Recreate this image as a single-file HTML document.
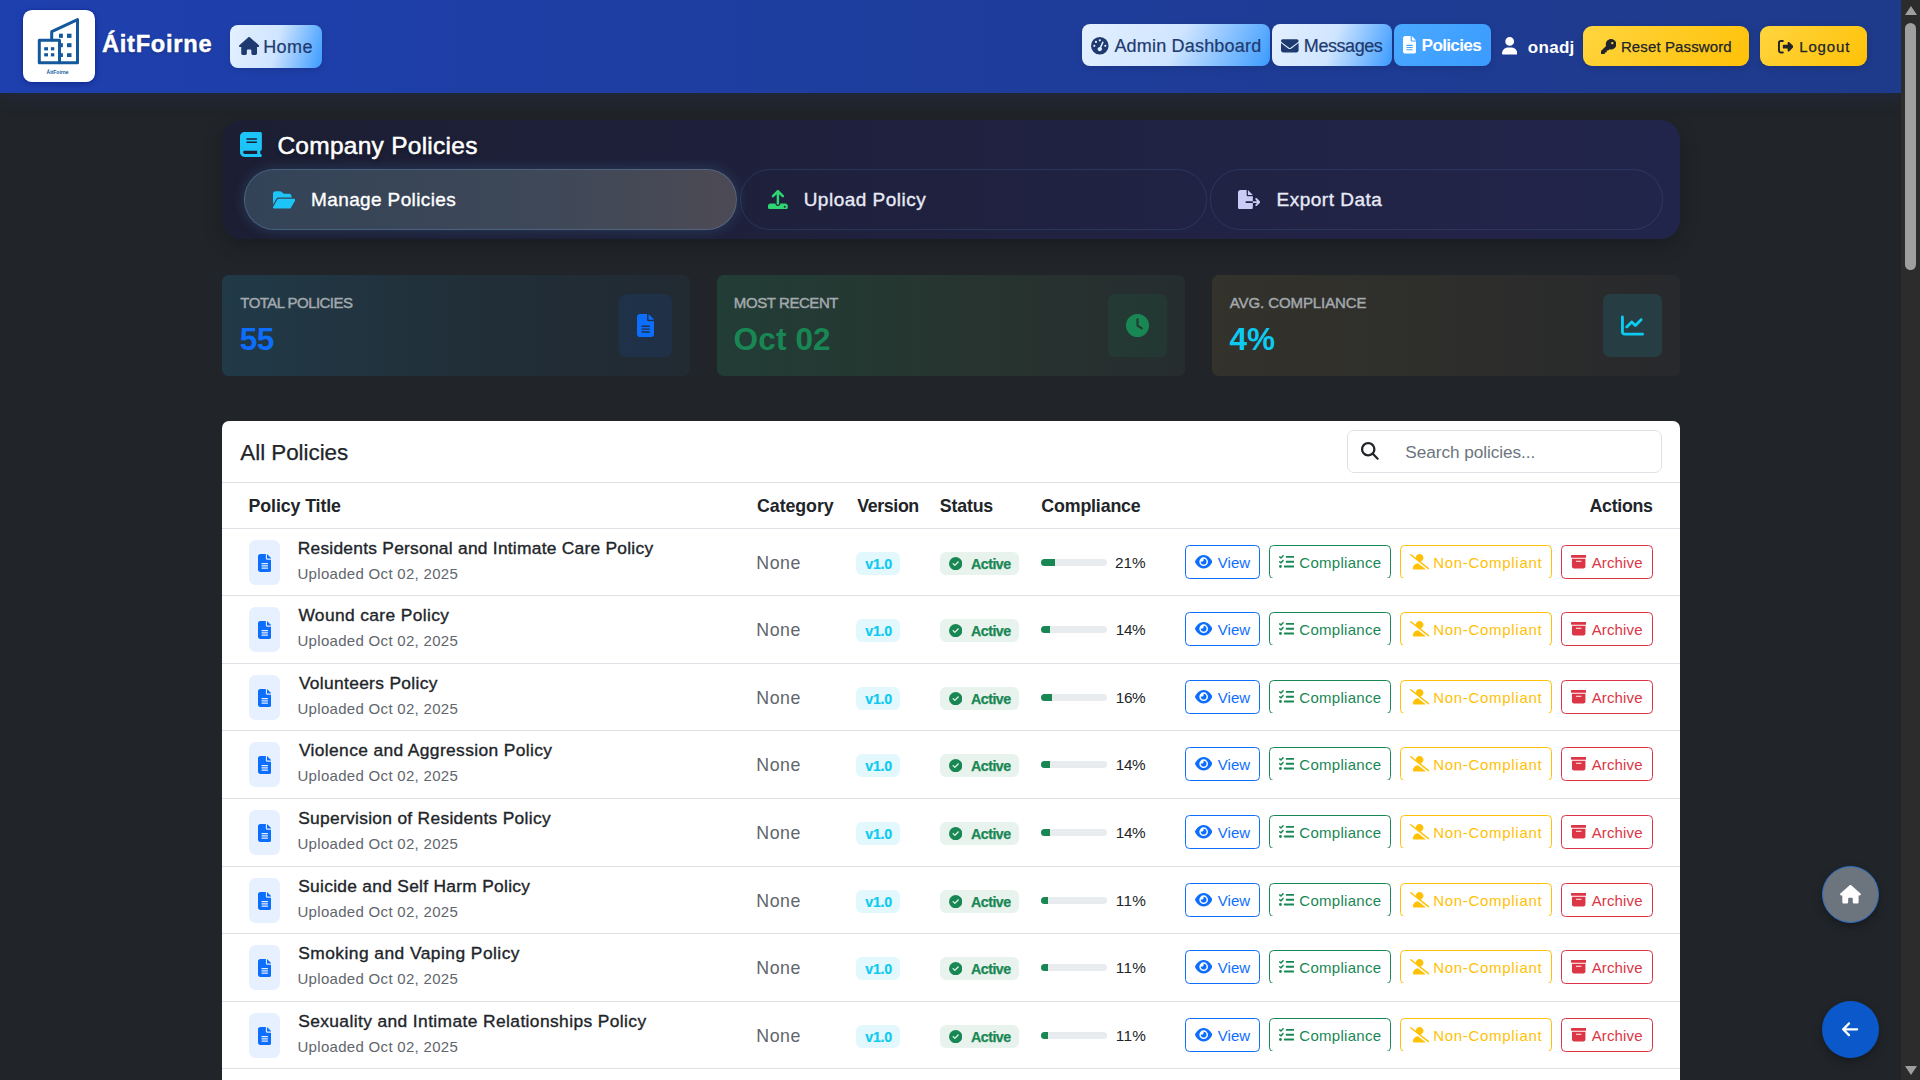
<!DOCTYPE html><html lang="en"><head><meta charset="utf-8"><title>Company Policies</title><style>
*{box-sizing:border-box;margin:0;padding:0}
html,body{width:1920px;height:1080px;overflow:hidden;background:#212529}
body{font-family:"Liberation Sans",sans-serif;font-size:17px;color:#212529;position:relative}
svg.ic{display:block}
.t{white-space:nowrap;display:inline-block}
.hdr{position:absolute;left:0;top:0;width:1901px;height:92.8px;background:linear-gradient(90deg,#1e40af 0%,#1e3a8a 100%);box-shadow:0 4px 18px rgba(30,64,175,.16)}
.logo{position:absolute;left:23px;top:10px;width:72px;height:72px;background:#fff;border-radius:8.8px;box-shadow:0 0 2px rgba(0,25,140,.8),0 2px 6px rgba(0,10,90,.3)}
.brand{position:absolute;left:102px;top:23.7px;line-height:40px;color:#fff;font-weight:700;font-size:23.6px;-webkit-text-stroke:.45px #fff;text-shadow:0 1px 3px rgba(0,0,0,.3)}
.nb{position:absolute;border-radius:8px;background:linear-gradient(117deg,#e4f0ff 0%,#cfe5ff 50%,#3b9bff 100%);color:#1e3a6e;font-size:18px;box-shadow:0 2px 6px rgba(0,0,0,.12);-webkit-text-stroke:.2px currentColor}
.nb.act{background:linear-gradient(135deg,#4aa9ff,#3a9bff);color:#fff;font-weight:700;font-size:17.2px;-webkit-text-stroke:0}
.usr{color:#fff;font-weight:700;font-size:17px}
.yb{position:absolute;border-radius:9px;background:linear-gradient(135deg,#ffd53f 0%,#ffc107 100%);color:#212529;font-size:15px;box-shadow:0 2px 6px rgba(0,0,0,.15)}
.yb .t{-webkit-text-stroke:.25px #212529}
.panel{position:absolute;left:222px;top:120px;width:1458px;height:119px;border-radius:20px;background:linear-gradient(90deg,#1c1e33 0%,#22254b 100%);box-shadow:0 6px 18px rgba(0,0,0,.25)}
.ptitle{position:absolute;left:56px;top:5.8px;line-height:40px;color:#fff;font-size:24.5px;-webkit-text-stroke:.5px #fff;text-shadow:0 2px 4px rgba(0,0,0,.3)}
.pill{position:absolute;top:49px;height:60.5px;border-radius:30px;border:1px solid rgba(80,130,190,.2);color:#e8eaf6;font-size:19px;-webkit-text-stroke:.35px currentColor}
.pill.on{background:linear-gradient(90deg,#334357 0%,#3e4858 60%,#4c4a54 100%);border-color:rgba(110,160,210,.32);box-shadow:0 0 14px rgba(90,170,220,.2);color:#fff}
.stat{position:absolute;top:275px;width:468px;height:101px;border-radius:7px}
.s1{background:linear-gradient(90deg,#213a48 0%,#212f39 50%,#222a32 100%)}
.s2{background:linear-gradient(90deg,#223d36 0%,#27342f 55%,#262d2f 100%)}
.s3{background:linear-gradient(90deg,#33322b 0%,#28292c 100%)}
.slabel{position:absolute;left:17.6px;top:18px;line-height:20px;font-size:15px;color:#a3a9ae;-webkit-text-stroke:.45px #a3a9ae}
.sval{position:absolute;left:17.6px;top:44px;line-height:40px;font-size:31.5px;font-weight:700}
.sic{position:absolute;right:18.2px;top:19px;height:63px;border-radius:7px;display:flex;align-items:center;justify-content:center}
.card{position:absolute;left:222px;top:421px;width:1458px;height:700px;background:#fff;border-radius:7px 7px 0 0;overflow:hidden}
.ctitle{position:absolute;left:18px;top:12px;line-height:40px;font-size:22.4px;color:#212529;-webkit-text-stroke:.25px #212529}
.search{position:absolute;left:1125px;top:9px;width:315px;height:43px;border:1px solid #dee2e6;border-radius:7px;font-size:17.2px}
.hline{position:absolute;left:0;width:100%;height:1px;background:#dee2e6}
.th{position:absolute;top:65px;line-height:40px;font-weight:700;font-size:17.8px;color:#212529}
.row{position:absolute;left:0;width:100%;border-bottom:1px solid #dee2e6}
.fbox{position:absolute;left:27.3px;top:11px;width:30.8px;height:45px;border-radius:6.5px;background:#e7f0ff;display:flex;align-items:center;justify-content:center}
.rt{position:absolute;left:76.5px;top:7.1px;line-height:24px;font-size:17.4px;color:#212529;-webkit-text-stroke:.35px #212529}
.ru{position:absolute;left:76.5px;top:34.1px;line-height:22px;font-size:15px;color:#5f666d}
.rn{position:absolute;left:535.4px;top:22px;line-height:24px;font-size:17.8px;color:#5f666d}
.bv{position:absolute;left:634px;top:22.5px;width:43.5px;height:23px;border-radius:6px;background:#e2f8fd;color:#0dcaf0;font-weight:700;font-size:14.2px;line-height:24px;text-align:center;-webkit-text-stroke:.2px #0dcaf0}
.ba{position:absolute;left:718px;top:22.5px;width:79px;height:23px;border-radius:6px;background:#e8f3ee;color:#198754;font-weight:700;font-size:14.2px;-webkit-text-stroke:.25px #198754}
.pb{position:absolute;left:819px;top:29.7px;width:66px;height:7px;border-radius:3.5px;background:#e9ecef;overflow:hidden}
.pb div{height:100%;background:#198754}
.pp{position:absolute;left:893.6px;top:21.5px;line-height:24px;font-size:15.3px;color:#212529}
.ab{position:absolute;top:16px;height:34px;border:1px solid;border-radius:4.5px;font-size:15px;line-height:33px}
.ab.nb0{clip-path:inset(-1px -1px 1px -1px)}
.ab.v{border-color:#0d6efd;color:#0d6efd}
.ab.c{border-color:#198754;color:#198754}
.ab.n{border-color:#ffc107;color:#ffc107}
.ab.a{border-color:#dc3545;color:#dc3545}
.fab{position:absolute;width:57px;height:57px;border-radius:50%;left:1822px;display:flex;align-items:center;justify-content:center;box-shadow:0 4px 10px rgba(0,0,0,.3)}
.fab.g{top:866px;background:#6c757d;border:1px solid #2a6fc9}
.fab.b{top:1001px;background:#0b58ca}
.sb{position:absolute;left:1901px;top:0;width:19px;height:1080px;background:#2c2c2c}
.sbt{position:absolute;left:4px;top:22.5px;width:11px;height:247px;border-radius:5.5px;background:#9f9f9f}
.sbu{position:absolute;left:3.5px;top:6px;width:0;height:0;border-left:6px solid transparent;border-right:6px solid transparent;border-bottom:9.5px solid #9f9f9f}
.sbd{position:absolute;left:3.5px;top:1065.5px;width:0;height:0;border-left:6px solid transparent;border-right:6px solid transparent;border-top:9.5px solid #9f9f9f}

</style></head><body>
<div class="hdr">
<div class="logo"><svg viewBox="0 0 72 72" width="72" height="72"><g fill="#14599e"><rect x="21.2" y="37.2" width="3.8" height="3.2"/><rect x="27.9" y="37.2" width="3.4" height="3.2"/><rect x="21.2" y="43.2" width="3.8" height="3.2"/><rect x="27.9" y="43.2" width="3.4" height="3.2"/><rect x="36" y="23.7" width="3.9" height="4.2"/><rect x="44" y="23.7" width="4.5" height="4.2"/><rect x="36" y="33.2" width="3.9" height="4"/><rect x="44" y="33.2" width="4.5" height="4"/><rect x="36" y="43.2" width="3.9" height="3.8"/><rect x="44" y="43.2" width="4.5" height="3.8"/></g><g fill="none" stroke="#14599e" stroke-width="3" stroke-linejoin="round" stroke-linecap="round"><path d="M28.7 30V21.7L54.5 9.6V52.8H37"/><rect x="16.3" y="30.2" width="20.2" height="22.6"/></g><text x="34.6" y="63.6" text-anchor="middle" font-family="Liberation Sans, sans-serif" font-weight="700" font-size="5" fill="#14599e">ÁitFoirne</text></svg></div>
<div class="brand"><span class="t " id="brand" style="letter-spacing:0.766px;transform:translateX(-0.12px);">ÁitFoirne</span></div>
<div class="nb home" style="left:230px;top:25px;width:92px;height:42.5px;background:linear-gradient(106deg,#e4f0ff 0%,#cfe5ff 50%,#3b9bff 100%)"><svg class="ic" viewBox="0 0 576 512" width="20.25" height="18" style="position:absolute;left:8.5px;top:11.6px"><path fill="#1e3a6e" d="M575.8 255.5c0 18-15 32.1-32 32.1h-32l.7 160.2c0 2.7-.2 5.4-.5 8.1V472c0 22.1-17.9 40-40 40H456c-1.1 0-2.2 0-3.3-.1c-1.4 .1-2.8 .1-4.2 .1H416 392c-22.1 0-40-17.9-40-40V448 384c0-17.7-14.3-32-32-32H256c-17.7 0-32 14.3-32 32v64 24c0 22.1-17.9 40-40 40H160 128.1c-1.5 0-3-.1-4.5-.2c-1.2 .1-2.4 .2-3.6 .2H104c-22.1 0-40-17.9-40-40V360c0-.9 0-1.9 .1-2.8V287.6H32c-18 0-32-14-32-32.1c0-9 3-17 10-24L266.400 8c7-7 15-8 22-8s15 2 21 7L564.8 231.5c8 7 12 15 11 24z"/></svg><span class="t " id="home" style="position:absolute;left:34.5px;top:1px;line-height:42px;letter-spacing:0.407px;transform:translateX(-1.31px);">Home</span></div>
<div class="nb" style="left:1082px;top:24px;width:188px;height:42px"><svg class="ic" viewBox="0 0 512 512" width="17.6" height="17.6" style="position:absolute;left:9px;top:13.2px"><path fill="#1e3a6e" d="M0 256a256 256 0 1 1 512 0A256 256 0 1 1 0 256zM288 96a32 32 0 1 0 -64 0 32 32 0 1 0 64 0zM256 416c35.3 0 64-28.7 64-64c0-17.4-6.9-33.1-18.1-44.6L366 161.700c5.3-12.1-.2-26.3-12.3-31.6s-26.3 .2-31.6 12.3L257.9 288c-.6 0-1.3 0-1.9 0c-35.3 0-64 28.7-64 64s28.700 64 64 64zM176 144a32 32 0 1 0 -64 0 32 32 0 1 0 64 0zM96 288a32 32 0 1 0 0-64 32 32 0 1 0 0 64zm352-32a32 32 0 1 0 -64 0 32 32 0 1 0 64 0z"/></svg><span class="t " id="admin" style="position:absolute;left:32px;top:1px;line-height:42px;letter-spacing:0.191px;transform:translateX(0.42px);">Admin Dashboard</span></div>
<div class="nb" style="left:1272px;top:24px;width:120px;height:42px;background:linear-gradient(110deg,#e4f0ff 0%,#cfe5ff 50%,#3b9bff 100%)"><svg class="ic" viewBox="0 0 512 512" width="17.6" height="17.6" style="position:absolute;left:9px;top:13.2px"><path fill="#1e3a6e" d="M48 64C21.5 64 0 85.5 0 112c0 15.1 7.1 29.3 19.2 38.4L236.8 313.6c11.4 8.5 27 8.5 38.4 0L492.8 150.4c12.1-9.1 19.2-23.3 19.2-38.4c0-26.5-21.5-48-48-48H48zM0 176V384c0 35.3 28.7 64 64 64H448c35.3 0 64-28.7 64-64V176L294.4 339.2c-22.8 17.1-54 17.1-76.8 0L0 176z"/></svg><span class="t " id="msgs" style="position:absolute;left:33px;top:1px;line-height:42px;letter-spacing:-0.439px;transform:translateX(-1.18px);">Messages</span></div>
<div class="nb act" style="left:1394px;top:24px;width:97px;height:42px"><svg class="ic" viewBox="0 0 384 512" width="13.2" height="17.6" style="position:absolute;left:9px;top:12.2px"><path fill="#fff" d="M64 0C28.7 0 0 28.7 0 64V448c0 35.3 28.7 64 64 64H320c35.3 0 64-28.7 64-64V160H256c-17.7 0-32-14.3-32-32V0H64zM256 0V128H384L256 0zM112 256H272c8.8 0 16 7.2 16 16s-7.2 16-16 16H112c-8.8 0-16-7.2-16-16s7.2-16 16-16zm0 64H272c8.8 0 16 7.2 16 16s-7.2 16-16 16H112c-8.8 0-16-7.2-16-16s7.2-16 16-16zm0 64H272c8.8 0 16 7.2 16 16s-7.2 16-16 16H112c-8.8 0-16-7.2-16-16s7.2-16 16-16z"/></svg><span class="t " id="pol" style="position:absolute;left:28px;top:0;line-height:42px;letter-spacing:-0.689px;transform:translateX(-0.39px);">Policies</span></div>
<div class="usr"><svg class="ic" viewBox="0 0 448 512" width="15.4" height="17.6" style="position:absolute;left:1502px;top:37.3px"><path fill="#fff" d="M224 256A128 128 0 1 0 224 0a128 128 0 1 0 0 256zm-45.7 48C79.8 304 0 383.8 0 482.3C0 498.7 13.3 512 29.7 512H418.3c16.4 0 29.7-13.3 29.7-29.7C448 383.8 368.2 304 269.7 304H178.3z"/></svg><span class="t " id="onadj" style="position:absolute;left:1528px;top:26.5px;line-height:42px;letter-spacing:0.29px;transform:translateX(-0.21px);">onadj</span></div>
<div class="yb" style="left:1583px;top:26px;width:166px;height:40px"><svg class="ic" viewBox="0 0 512 512" width="15.4" height="15.4" style="position:absolute;left:18px;top:12.6px"><path fill="#212529" d="M336 352c97.2 0 176-78.8 176-176S433.2 0 336 0S160 78.8 160 176c0 18.7 2.9 36.8 8.3 53.7L7 391c-4.5 4.5-7 10.6-7 17v80c0 13.3 10.7 24 24 24h80c13.3 0 24-10.7 24-24V448h40c13.3 0 24-10.7 24-24V384h40c6.4 0 12.5-2.5 17-7l33.3-33.3c16.9 5.4 35 8.3 53.7 8.3zM376 96a40 40 0 1 1 0 80 40 40 0 1 1 0-80z"/></svg><span class="t " id="reset" style="position:absolute;left:38.8px;top:1px;line-height:40px;letter-spacing:0.123px;transform:translateX(-0.92px);">Reset Password</span></div>
<div class="yb" style="left:1760px;top:26px;width:107px;height:40px"><svg class="ic" viewBox="0 0 512 512" width="15.4" height="15.4" style="position:absolute;left:18px;top:12.6px"><path fill="#212529" d="M377.9 105.9L500.7 228.7c7.2 7.2 11.3 17.1 11.3 27.3s-4.1 20.1-11.3 27.3L377.9 406.1c-6.4 6.4-15 9.9-24 9.9c-18.7 0-33.9-15.2-33.9-33.9l0-62.1-128 0c-17.7 0-32-14.3-32-32l0-64c0-17.7 14.3-32 32-32l128 0 0-62.1c0-18.7 15.2-33.9 33.9-33.9c9 0 17.6 3.6 24 9.9zM160 96L96 96c-17.7 0-32 14.3-32 32l0 256c0 17.7 14.3 32 32 32l64 0c17.7 0 32 14.3 32 32s-14.3 32-32 32l-64 0c-53 0-96-43-96-96L0 128C0 75 43 32 96 32l64 0c17.7 0 32 14.3 32 32s-14.3 32-32 32z"/></svg><span class="t " id="logout" style="position:absolute;left:39.6px;top:1px;line-height:40px;letter-spacing:0.866px;transform:translateX(-0.39px);">Logout</span></div>
</div>
<div class="panel">
<svg class="ic" viewBox="0 0 448 512" width="21.88" height="25" style="position:absolute;left:18px;top:12px"><path fill="#1cc4f8" d="M96 0C43 0 0 43 0 96V416c0 53 43 96 96 96H384h32c17.7 0 32-14.3 32-32s-14.3-32-32-32V384c17.7 0 32-14.3 32-32V32c0-17.7-14.3-32-32-32H384 96zm0 384H352v64H96c-17.7 0-32-14.3-32-32s14.3-32 32-32zm32-240c0-8.800 7.2-16 16-16H336c8.800 0 16 7.2 16 16s-7.2 16-16 16H144c-8.800 0-16-7.2-16-16zm16 48H336c8.800 0 16 7.2 16 16s-7.2 16-16 16H144c-8.800 0-16-7.2-16-16s7.2-16 16-16z"/></svg>
<span class="t ptitle" id="title" style="letter-spacing:0.261px;transform:translateX(-0.6px);">Company Policies</span>
<div class="pill on" style="left:21.5px;width:493.5px"><svg class="ic" viewBox="0 0 576 512" width="22.28" height="19.8" style="position:absolute;left:28px;top:19.5px"><path fill="#1cc4f8" d="M88.7 223.8L0 375.8V96C0 60.7 28.7 32 64 32H181.5c17 0 33.3 6.7 45.3 18.7l26.5 26.5c12 12 28.3 18.7 45.3 18.7H416c35.3 0 64 28.7 64 64v32H144c-22.8 0-43.8 12.1-55.3 31.8zm27.6 16.1C122.1 230 132.6 224 144 224H544c11.5 0 22 6.1 27.7 16.1s5.700 22.2-.1 32.1l-112 192C453.9 474 443.4 480 432 480H32c-11.500 0-22-6.1-27.7-16.1s-5.700-22.2 .1-32.1l112-192z"/></svg><span class="t " id="manage" style="position:absolute;left:68.5px;top:0;line-height:59px;letter-spacing:0.366px;transform:translateX(-1.88px);">Manage Policies</span></div>
<div class="pill" style="left:518px;width:467px"><svg class="ic" viewBox="0 0 512 512" width="19.8" height="19.8" style="position:absolute;left:27px;top:19.6px"><path fill="#2fd673" d="M288 109.3V352c0 17.7-14.3 32-32 32s-32-14.3-32-32V109.3l-73.4 73.4c-12.5 12.5-32.8 12.5-45.3 0s-12.5-32.8 0-45.3l128-128c12.5-12.5 32.8-12.5 45.3 0l128 128c12.5 12.5 12.5 32.8 0 45.3s-32.800 12.5-45.3 0L288 109.3zM64 352H192c0 35.3 28.7 64 64 64s64-28.7 64-64H448c35.3 0 64 28.7 64 64v32c0 35.3-28.7 64-64 64H64c-35.3 0-64-28.7-64-64V416c0-35.3 28.7-64 64-64zM432 456a24 24 0 1 0 0-48 24 24 0 1 0 0 48z"/></svg><span class="t " id="upl" style="position:absolute;left:64.5px;top:0;line-height:59px;letter-spacing:0.498px;transform:translateX(-1.86px);">Upload Policy</span></div>
<div class="pill" style="left:988px;width:453px"><svg class="ic" viewBox="0 0 576 512" width="22.28" height="19.8" style="position:absolute;left:27px;top:19.6px"><path fill="#c9cdf5" d="M0 64C0 28.7 28.7 0 64 0H224V128c0 17.7 14.3 32 32 32H384V288H216c-13.3 0-24 10.7-24 24s10.7 24 24 24H384V448c0 35.3-28.7 64-64 64H64c-35.3 0-64-28.7-64-64V64zM384 336V288H494.1l-39-39c-9.4-9.4-9.4-24.6 0-33.9s24.6-9.4 33.9 0l80 80c9.4 9.4 9.4 24.6 0 33.9l-80 80c-9.4 9.4-24.6 9.4-33.9 0s-9.4-24.6 0-33.9l39-39H384zm0-208H256V0L384 128z"/></svg><span class="t " id="exp" style="position:absolute;left:67.5px;top:0;line-height:59px;letter-spacing:0.508px;transform:translateX(-2.0px);">Export Data</span></div>
</div>
<div class="stat s1" style="left:222px"><span class="t slabel" id="l1" style="letter-spacing:-0.545px;transform:translateX(0.69px);">TOTAL POLICIES</span><span class="t sval" id="v1" style="color:#0d6efd;letter-spacing:-0.415px;transform:translateX(0.1px);">55</span><div class="sic" style="width:52.5px;background:rgba(13,110,253,.10)"><svg class="ic" viewBox="0 0 384 512" width="17.25" height="23" style=""><path fill="#0d6efd" d="M64 0C28.7 0 0 28.7 0 64V448c0 35.3 28.7 64 64 64H320c35.3 0 64-28.7 64-64V160H256c-17.7 0-32-14.3-32-32V0H64zM256 0V128H384L256 0zM112 256H272c8.8 0 16 7.2 16 16s-7.2 16-16 16H112c-8.8 0-16-7.2-16-16s7.2-16 16-16zm0 64H272c8.8 0 16 7.2 16 16s-7.2 16-16 16H112c-8.8 0-16-7.2-16-16s7.2-16 16-16zm0 64H272c8.8 0 16 7.2 16 16s-7.2 16-16 16H112c-8.8 0-16-7.2-16-16s7.2-16 16-16z"/></svg></div></div>
<div class="stat s2" style="left:717px"><span class="t slabel" id="l2" style="letter-spacing:-0.422px;transform:translateX(-0.74px);">MOST RECENT</span><span class="t sval" id="v2" style="color:#198754;letter-spacing:0.132px;transform:translateX(-0.98px);">Oct 02</span><div class="sic" style="width:58.6px;background:rgba(25,135,84,.12)"><svg class="ic" viewBox="0 0 512 512" width="23.0" height="23" style=""><path fill="#198754" d="M256 0a256 256 0 1 1 0 512A256 256 0 1 1 256 0zM232 120V256c0 8 4 15.5 10.7 20l96 64c11 7.4 25.9 4.4 33.3-6.700s4.400-25.9-6.7-33.3L280 243.2V120c0-13.3-10.7-24-24-24s-24 10.7-24 24z"/></svg></div></div>
<div class="stat s3" style="left:1212px"><span class="t slabel" id="l3" style="letter-spacing:-0.1px;transform:translateX(0.23px);">AVG. COMPLIANCE</span><span class="t sval" id="v3" style="color:#0dcaf0;letter-spacing:0.166px;transform:translateX(-0.17px);">4%</span><div class="sic" style="width:58.6px;background:rgba(13,202,240,.12)"><svg class="ic" viewBox="0 0 512 512" width="23.0" height="23" style=""><path fill="#0dcaf0" d="M64 64c0-17.7-14.3-32-32-32S0 46.3 0 64V400c0 44.2 35.8 80 80 80H480c17.7 0 32-14.3 32-32s-14.3-32-32-32H80c-8.8 0-16-7.2-16-16V64zm406.6 86.6c12.5-12.5 12.5-32.8 0-45.3s-32.8-12.5-45.3 0L320 210.7l-57.4-57.4c-12.5-12.5-32.8-12.5-45.3 0l-112 112c-12.5 12.5-12.5 32.8 0 45.3s32.800 12.5 45.3 0L240 221.3l57.4 57.4c12.5 12.5 32.8 12.5 45.3 0l128-128z"/></svg></div></div>
<div class="card">
<span class="t ctitle" id="allp" style="letter-spacing:-0.039px;transform:translateX(0.35px);">All Policies</span>
<div class="search"><svg class="ic" viewBox="0 0 512 512" width="17.8" height="17.8" style="position:absolute;left:12.9px;top:10.9px"><path fill="#212529" d="M416 208c0 45.9-14.9 88.3-40 122.7L502.6 457.4c12.5 12.5 12.5 32.8 0 45.3s-32.800 12.5-45.3 0L330.7 376c-34.4 25.2-76.8 40-122.7 40C93.1 416 0 322.9 0 208S93.1 0 208 0S416 93.1 416 208zM208 352a144 144 0 1 0 0-288 144 144 0 1 0 0 288z"/></svg><span class="t " id="sph" style="position:absolute;left:58.3px;top:1.4px;line-height:41px;color:#6c757d;letter-spacing:-0.053px;transform:translateX(-0.97px);">Search policies...</span></div>
<div class="hline" style="top:61px"></div>
<span class="t th" id="h1" style="left:27.3px;letter-spacing:-0.109px;transform:translateX(-0.68px);">Policy Title</span>
<span class="t th" id="h2" style="left:535.4px;letter-spacing:-0.079px;transform:translateX(-0.28px);">Category</span>
<span class="t th" id="h3" style="left:635.3px;letter-spacing:-0.382px;transform:translateX(-0.01px);">Version</span>
<span class="t th" id="h4" style="left:718.7px;letter-spacing:-0.185px;transform:translateX(-0.85px);">Status</span>
<span class="t th" id="h5" style="left:819.6px;letter-spacing:-0.155px;transform:translateX(-0.26px);">Compliance</span>
<span class="t th" id="h6" style="right:27.5px;letter-spacing:-0.277px;transform:translateX(0.22px);">Actions</span>
<div class="hline" style="top:107px"></div>
<div class="row" style="top:108px;height:67px">
<div class="fbox"><svg class="ic" viewBox="0 0 384 512" width="13.5" height="18" style=""><path fill="#0d6efd" d="M64 0C28.7 0 0 28.7 0 64V448c0 35.3 28.7 64 64 64H320c35.3 0 64-28.7 64-64V160H256c-17.7 0-32-14.3-32-32V0H64zM256 0V128H384L256 0zM112 256H272c8.8 0 16 7.2 16 16s-7.2 16-16 16H112c-8.8 0-16-7.2-16-16s7.2-16 16-16zm0 64H272c8.8 0 16 7.2 16 16s-7.2 16-16 16H112c-8.8 0-16-7.2-16-16s7.2-16 16-16zm0 64H272c8.8 0 16 7.2 16 16s-7.2 16-16 16H112c-8.8 0-16-7.2-16-16s7.2-16 16-16z"/></svg></div>
<span class="t rt" id="r0" style="letter-spacing:0.246px;transform:translateX(-0.84px);">Residents Personal and Intimate Care Policy</span>
<span class="t ru" id="u0" style="letter-spacing:0.305px;transform:translateX(-1.03px);">Uploaded Oct 02, 2025</span>
<span class="t rn" id="n0" style="letter-spacing:0.502px;transform:translateX(-1.07px);">None</span>
<div class="bv"><span class="t " id="b0" style="letter-spacing:-0.244px;transform:translateX(0.81px);">v1.0</span></div>
<div class="ba"><svg class="ic" viewBox="0 0 512 512" width="13.3" height="13.3" style="position:absolute;left:9px;top:5.6px"><path fill="#198754" d="M256 512A256 256 0 1 0 256 0a256 256 0 1 0 0 512zM369 209L241 337c-9.400 9.400-24.600 9.400-33.900 0l-64-64c-9.400-9.400-9.400-24.600 0-33.900s24.600-9.400 33.900 0l47 47L335 175c9.400-9.400 24.600-9.400 33.900 0s9.400 24.600 0 33.900z"/></svg><span class="t " id="a0" style="position:absolute;left:31.5px;top:0;line-height:24px;letter-spacing:-0.512px;transform:translateX(-0.44px);">Active</span></div>
<div class="pb"><div style="width:21%"></div></div>
<span class="t pp" id="p0" style="letter-spacing:0.006px;transform:translateX(-0.5px);">21%</span>
<div class="ab v" style="left:963px;width:75px"><svg class="ic" viewBox="0 0 576 512" width="17.32" height="15.4" style="position:absolute;left:8.8px;top:8.4px"><path fill="#0d6efd" d="M288 32c-80.8 0-145.5 36.8-192.6 80.6C48.6 156 17.3 208 2.5 243.7c-3.3 7.9-3.3 16.7 0 24.6C17.3 304 48.6 356 95.4 399.4C142.5 443.2 207.2 480 288 480s145.5-36.8 192.6-80.6c46.8-43.5 78.1-95.4 93-131.1c3.3-7.9 3.3-16.7 0-24.6c-14.9-35.7-46.2-87.7-93-131.1C433.5 68.8 368.8 32 288 32zM144 256a144 144 0 1 1 288 0 144 144 0 1 1 -288 0zm144-64c0 35.3-28.7 64-64 64c-7.1 0-13.9-1.2-20.3-3.3c-5.500-1.8-11.9 1.6-11.7 7.4c.3 6.9 1.3 13.8 3.2 20.7c13.7 51.2 66.4 81.6 117.6 67.9s81.600-66.4 67.9-117.6c-11.100-41.5-47.800-69.4-88.600-71.100c-5.800-.2-9.200 6.100-7.400 11.700c2.100 6.400 3.300 13.200 3.300 20.300z"/></svg><span class="t " id="bv0" style="position:absolute;left:31.4px;letter-spacing:0.085px;transform:translateX(0.26px);">View</span></div>
<div class="ab c nb0" style="left:1047px;width:122.4px"><svg class="ic" viewBox="0 0 512 512" width="15.4" height="15.4" style="position:absolute;left:8.8px;top:8.4px"><path fill="#198754" d="M152.1 38.2c9.9 8.9 10.7 24 1.8 33.9l-72 80c-4.4 4.9-10.6 7.8-17.2 7.900s-12.900-2.400-17.600-7L7 113C-2.300 103.600-2.300 88.400 7 79s24.600-9.400 33.900 0l22.100 22.100 55.100-61.200c8.900-9.900 24-10.700 33.900-1.800zm0 160c9.900 8.900 10.700 24 1.800 33.900l-72 80c-4.400 4.900-10.600 7.800-17.200 7.900s-12.900-2.400-17.600-7L7 273c-9.400-9.400-9.400-24.600 0-33.900s24.600-9.400 33.900 0l22.100 22.100 55.100-61.200c8.900-9.900 24-10.700 33.900-1.800zM224 96c0-17.700 14.300-32 32-32H480c17.700 0 32 14.300 32 32s-14.300 32-32 32H256c-17.700 0-32-14.300-32-32zm0 160c0-17.700 14.300-32 32-32H480c17.700 0 32 14.300 32 32s-14.300 32-32 32H256c-17.700 0-32-14.300-32-32zM160 416c0-17.700 14.300-32 32-32H480c17.700 0 32 14.300 32 32s-14.300 32-32 32H192c-17.700 0-32-14.300-32-32zM48 368a48 48 0 1 1 0 96 48 48 0 1 1 0-96z"/></svg><span class="t " id="bc0" style="position:absolute;left:29.6px;letter-spacing:0.287px;transform:translateX(-0.31px);">Compliance</span></div>
<div class="ab n nb0" style="left:1178px;width:152px"><svg class="ic" viewBox="0 0 640 512" width="19.25" height="15.4" style="position:absolute;left:8.8px;top:8.4px"><path fill="#ffc107" d="M38.8 5.1C28.4-3.1 13.3-1.2 5.1 9.2S-1.2 34.7 9.2 42.9l592 464c10.4 8.2 25.5 6.3 33.7-4.100s6.300-25.5-4.100-33.700L353.300 251.600C407.900 237 448 187.200 448 128C448 57.300 390.700 0 320 0C250.200 0 193.500 55.800 192 125.200L38.800 5.100zM264.300 304.300C170.500 309.400 96 387.200 96 482.300c0 16.400 13.300 29.700 29.700 29.700H514.300c3.900 0 7.600-.7 11-2.100l-261-205.600z"/></svg><span class="t " id="bn0" style="position:absolute;left:33.5px;letter-spacing:0.703px;transform:translateX(-1.33px);">Non-Compliant</span></div>
<div class="ab a" style="left:1339px;width:92px"><svg class="ic" viewBox="0 0 512 512" width="15.4" height="15.4" style="position:absolute;left:8.8px;top:8.4px"><path fill="#dc3545" d="M32 32H480c17.700 0 32 14.300 32 32V96c0 17.700-14.300 32-32 32H32C14.300 128 0 113.700 0 96V64C0 46.300 14.300 32 32 32zm0 128H480V416c0 35.300-28.700 64-64 64H96c-35.300 0-64-28.700-64-64V160zm128 80c0 8.800 7.200 16 16 16H336c8.800 0 16-7.200 16-16s-7.200-16-16-16H176c-8.800 0-16 7.200-16 16z"/></svg><span class="t " id="bar0" style="position:absolute;left:29.5px;letter-spacing:0.136px;transform:translateX(0.2px);">Archive</span></div>
</div>
<div class="row" style="top:175px;height:68px">
<div class="fbox"><svg class="ic" viewBox="0 0 384 512" width="13.5" height="18" style=""><path fill="#0d6efd" d="M64 0C28.7 0 0 28.7 0 64V448c0 35.3 28.7 64 64 64H320c35.3 0 64-28.7 64-64V160H256c-17.7 0-32-14.3-32-32V0H64zM256 0V128H384L256 0zM112 256H272c8.8 0 16 7.2 16 16s-7.2 16-16 16H112c-8.8 0-16-7.2-16-16s7.2-16 16-16zm0 64H272c8.8 0 16 7.2 16 16s-7.2 16-16 16H112c-8.8 0-16-7.2-16-16s7.2-16 16-16zm0 64H272c8.8 0 16 7.2 16 16s-7.2 16-16 16H112c-8.8 0-16-7.2-16-16s7.2-16 16-16z"/></svg></div>
<span class="t rt" id="r1" style="letter-spacing:0.373px;transform:translateX(-0.1px);">Wound care Policy</span>
<span class="t ru" id="u1" style="letter-spacing:0.305px;transform:translateX(-1.03px);">Uploaded Oct 02, 2025</span>
<span class="t rn" id="n1" style="letter-spacing:0.502px;transform:translateX(-1.07px);">None</span>
<div class="bv"><span class="t " id="b1" style="letter-spacing:-0.244px;transform:translateX(0.81px);">v1.0</span></div>
<div class="ba"><svg class="ic" viewBox="0 0 512 512" width="13.3" height="13.3" style="position:absolute;left:9px;top:5.6px"><path fill="#198754" d="M256 512A256 256 0 1 0 256 0a256 256 0 1 0 0 512zM369 209L241 337c-9.400 9.400-24.600 9.400-33.900 0l-64-64c-9.400-9.400-9.400-24.600 0-33.900s24.600-9.400 33.900 0l47 47L335 175c9.400-9.400 24.600-9.400 33.900 0s9.400 24.600 0 33.900z"/></svg><span class="t " id="a1" style="position:absolute;left:31.5px;top:0;line-height:24px;letter-spacing:-0.512px;transform:translateX(-0.44px);">Active</span></div>
<div class="pb"><div style="width:14%"></div></div>
<span class="t pp" id="p1" style="letter-spacing:-0.423px;transform:translateX(0.28px);">14%</span>
<div class="ab v" style="left:963px;width:75px"><svg class="ic" viewBox="0 0 576 512" width="17.32" height="15.4" style="position:absolute;left:8.8px;top:8.4px"><path fill="#0d6efd" d="M288 32c-80.8 0-145.5 36.8-192.6 80.6C48.6 156 17.3 208 2.5 243.7c-3.3 7.9-3.3 16.7 0 24.6C17.3 304 48.6 356 95.4 399.4C142.5 443.2 207.2 480 288 480s145.5-36.8 192.6-80.6c46.8-43.5 78.1-95.4 93-131.1c3.3-7.9 3.3-16.7 0-24.6c-14.9-35.7-46.2-87.7-93-131.1C433.5 68.8 368.8 32 288 32zM144 256a144 144 0 1 1 288 0 144 144 0 1 1 -288 0zm144-64c0 35.3-28.7 64-64 64c-7.1 0-13.9-1.2-20.3-3.3c-5.500-1.8-11.9 1.6-11.7 7.4c.3 6.9 1.3 13.8 3.2 20.7c13.7 51.2 66.4 81.6 117.6 67.9s81.600-66.4 67.9-117.6c-11.100-41.5-47.800-69.4-88.600-71.100c-5.800-.2-9.200 6.100-7.400 11.700c2.100 6.400 3.300 13.200 3.300 20.300z"/></svg><span class="t " id="bv1" style="position:absolute;left:31.4px;letter-spacing:0.085px;transform:translateX(0.26px);">View</span></div>
<div class="ab c nb0" style="left:1047px;width:122.4px"><svg class="ic" viewBox="0 0 512 512" width="15.4" height="15.4" style="position:absolute;left:8.8px;top:8.4px"><path fill="#198754" d="M152.1 38.2c9.9 8.9 10.7 24 1.8 33.9l-72 80c-4.4 4.9-10.6 7.8-17.2 7.900s-12.900-2.400-17.600-7L7 113C-2.300 103.600-2.300 88.400 7 79s24.600-9.400 33.900 0l22.100 22.100 55.100-61.200c8.900-9.900 24-10.700 33.900-1.800zm0 160c9.900 8.900 10.700 24 1.800 33.900l-72 80c-4.400 4.900-10.600 7.800-17.200 7.900s-12.900-2.400-17.600-7L7 273c-9.400-9.400-9.400-24.600 0-33.900s24.600-9.400 33.900 0l22.100 22.100 55.100-61.200c8.900-9.900 24-10.700 33.900-1.800zM224 96c0-17.700 14.300-32 32-32H480c17.700 0 32 14.300 32 32s-14.300 32-32 32H256c-17.700 0-32-14.300-32-32zm0 160c0-17.700 14.300-32 32-32H480c17.700 0 32 14.300 32 32s-14.300 32-32 32H256c-17.700 0-32-14.300-32-32zM160 416c0-17.700 14.300-32 32-32H480c17.700 0 32 14.300 32 32s-14.300 32-32 32H192c-17.700 0-32-14.300-32-32zM48 368a48 48 0 1 1 0 96 48 48 0 1 1 0-96z"/></svg><span class="t " id="bc1" style="position:absolute;left:29.6px;letter-spacing:0.287px;transform:translateX(-0.31px);">Compliance</span></div>
<div class="ab n nb0" style="left:1178px;width:152px"><svg class="ic" viewBox="0 0 640 512" width="19.25" height="15.4" style="position:absolute;left:8.8px;top:8.4px"><path fill="#ffc107" d="M38.8 5.1C28.4-3.1 13.3-1.2 5.1 9.2S-1.2 34.7 9.2 42.9l592 464c10.4 8.2 25.5 6.3 33.7-4.100s6.300-25.5-4.100-33.700L353.300 251.600C407.900 237 448 187.200 448 128C448 57.300 390.700 0 320 0C250.200 0 193.500 55.800 192 125.200L38.800 5.100zM264.300 304.300C170.500 309.400 96 387.200 96 482.300c0 16.400 13.300 29.700 29.700 29.700H514.300c3.900 0 7.600-.7 11-2.100l-261-205.600z"/></svg><span class="t " id="bn1" style="position:absolute;left:33.5px;letter-spacing:0.703px;transform:translateX(-1.33px);">Non-Compliant</span></div>
<div class="ab a" style="left:1339px;width:92px"><svg class="ic" viewBox="0 0 512 512" width="15.4" height="15.4" style="position:absolute;left:8.8px;top:8.4px"><path fill="#dc3545" d="M32 32H480c17.700 0 32 14.300 32 32V96c0 17.700-14.300 32-32 32H32C14.300 128 0 113.700 0 96V64C0 46.300 14.300 32 32 32zm0 128H480V416c0 35.300-28.700 64-64 64H96c-35.300 0-64-28.700-64-64V160zm128 80c0 8.800 7.200 16 16 16H336c8.800 0 16-7.200 16-16s-7.200-16-16-16H176c-8.800 0-16 7.200-16 16z"/></svg><span class="t " id="bar1" style="position:absolute;left:29.5px;letter-spacing:0.136px;transform:translateX(0.2px);">Archive</span></div>
</div>
<div class="row" style="top:243px;height:67px">
<div class="fbox"><svg class="ic" viewBox="0 0 384 512" width="13.5" height="18" style=""><path fill="#0d6efd" d="M64 0C28.7 0 0 28.7 0 64V448c0 35.3 28.7 64 64 64H320c35.3 0 64-28.7 64-64V160H256c-17.7 0-32-14.3-32-32V0H64zM256 0V128H384L256 0zM112 256H272c8.8 0 16 7.2 16 16s-7.2 16-16 16H112c-8.8 0-16-7.2-16-16s7.2-16 16-16zm0 64H272c8.8 0 16 7.2 16 16s-7.2 16-16 16H112c-8.8 0-16-7.2-16-16s7.2-16 16-16zm0 64H272c8.8 0 16 7.2 16 16s-7.2 16-16 16H112c-8.8 0-16-7.2-16-16s7.2-16 16-16z"/></svg></div>
<span class="t rt" id="r2" style="letter-spacing:0.314px;transform:translateX(0.41px);">Volunteers Policy</span>
<span class="t ru" id="u2" style="letter-spacing:0.305px;transform:translateX(-1.03px);">Uploaded Oct 02, 2025</span>
<span class="t rn" id="n2" style="letter-spacing:0.502px;transform:translateX(-1.07px);">None</span>
<div class="bv"><span class="t " id="b2" style="letter-spacing:-0.244px;transform:translateX(0.81px);">v1.0</span></div>
<div class="ba"><svg class="ic" viewBox="0 0 512 512" width="13.3" height="13.3" style="position:absolute;left:9px;top:5.6px"><path fill="#198754" d="M256 512A256 256 0 1 0 256 0a256 256 0 1 0 0 512zM369 209L241 337c-9.400 9.400-24.600 9.400-33.900 0l-64-64c-9.400-9.400-9.400-24.600 0-33.900s24.600-9.400 33.900 0l47 47L335 175c9.400-9.400 24.600-9.400 33.900 0s9.400 24.600 0 33.900z"/></svg><span class="t " id="a2" style="position:absolute;left:31.5px;top:0;line-height:24px;letter-spacing:-0.512px;transform:translateX(-0.44px);">Active</span></div>
<div class="pb"><div style="width:16%"></div></div>
<span class="t pp" id="p2" style="letter-spacing:-0.423px;transform:translateX(0.28px);">16%</span>
<div class="ab v" style="left:963px;width:75px"><svg class="ic" viewBox="0 0 576 512" width="17.32" height="15.4" style="position:absolute;left:8.8px;top:8.4px"><path fill="#0d6efd" d="M288 32c-80.8 0-145.5 36.8-192.6 80.6C48.6 156 17.3 208 2.5 243.7c-3.3 7.9-3.3 16.7 0 24.6C17.3 304 48.6 356 95.4 399.4C142.5 443.2 207.2 480 288 480s145.5-36.8 192.6-80.6c46.8-43.5 78.1-95.4 93-131.1c3.3-7.9 3.3-16.7 0-24.6c-14.9-35.7-46.2-87.7-93-131.1C433.5 68.8 368.8 32 288 32zM144 256a144 144 0 1 1 288 0 144 144 0 1 1 -288 0zm144-64c0 35.3-28.7 64-64 64c-7.1 0-13.9-1.2-20.3-3.3c-5.500-1.8-11.9 1.6-11.7 7.4c.3 6.9 1.3 13.8 3.2 20.7c13.7 51.2 66.4 81.6 117.6 67.9s81.600-66.4 67.9-117.6c-11.100-41.5-47.800-69.4-88.600-71.100c-5.800-.2-9.200 6.100-7.400 11.700c2.100 6.400 3.300 13.200 3.300 20.300z"/></svg><span class="t " id="bv2" style="position:absolute;left:31.4px;letter-spacing:0.085px;transform:translateX(0.26px);">View</span></div>
<div class="ab c nb0" style="left:1047px;width:122.4px"><svg class="ic" viewBox="0 0 512 512" width="15.4" height="15.4" style="position:absolute;left:8.8px;top:8.4px"><path fill="#198754" d="M152.1 38.2c9.9 8.9 10.7 24 1.8 33.9l-72 80c-4.4 4.9-10.6 7.8-17.2 7.900s-12.900-2.400-17.600-7L7 113C-2.300 103.600-2.300 88.400 7 79s24.600-9.400 33.900 0l22.100 22.100 55.100-61.200c8.900-9.900 24-10.700 33.900-1.800zm0 160c9.900 8.900 10.700 24 1.800 33.900l-72 80c-4.400 4.900-10.600 7.800-17.200 7.900s-12.900-2.400-17.600-7L7 273c-9.400-9.400-9.400-24.600 0-33.900s24.600-9.400 33.900 0l22.100 22.100 55.100-61.200c8.900-9.900 24-10.700 33.900-1.800zM224 96c0-17.700 14.300-32 32-32H480c17.700 0 32 14.300 32 32s-14.300 32-32 32H256c-17.700 0-32-14.300-32-32zm0 160c0-17.700 14.300-32 32-32H480c17.700 0 32 14.300 32 32s-14.300 32-32 32H256c-17.700 0-32-14.300-32-32zM160 416c0-17.700 14.300-32 32-32H480c17.700 0 32 14.300 32 32s-14.300 32-32 32H192c-17.700 0-32-14.300-32-32zM48 368a48 48 0 1 1 0 96 48 48 0 1 1 0-96z"/></svg><span class="t " id="bc2" style="position:absolute;left:29.6px;letter-spacing:0.287px;transform:translateX(-0.31px);">Compliance</span></div>
<div class="ab n nb0" style="left:1178px;width:152px"><svg class="ic" viewBox="0 0 640 512" width="19.25" height="15.4" style="position:absolute;left:8.8px;top:8.4px"><path fill="#ffc107" d="M38.8 5.1C28.4-3.1 13.3-1.2 5.1 9.2S-1.2 34.7 9.2 42.9l592 464c10.4 8.2 25.5 6.3 33.7-4.100s6.300-25.5-4.100-33.700L353.300 251.600C407.900 237 448 187.200 448 128C448 57.300 390.700 0 320 0C250.200 0 193.500 55.800 192 125.200L38.800 5.100zM264.300 304.300C170.500 309.400 96 387.200 96 482.300c0 16.400 13.300 29.700 29.700 29.700H514.300c3.900 0 7.600-.7 11-2.100l-261-205.600z"/></svg><span class="t " id="bn2" style="position:absolute;left:33.5px;letter-spacing:0.703px;transform:translateX(-1.33px);">Non-Compliant</span></div>
<div class="ab a" style="left:1339px;width:92px"><svg class="ic" viewBox="0 0 512 512" width="15.4" height="15.4" style="position:absolute;left:8.8px;top:8.4px"><path fill="#dc3545" d="M32 32H480c17.700 0 32 14.300 32 32V96c0 17.700-14.300 32-32 32H32C14.300 128 0 113.700 0 96V64C0 46.300 14.300 32 32 32zm0 128H480V416c0 35.300-28.700 64-64 64H96c-35.300 0-64-28.700-64-64V160zm128 80c0 8.800 7.200 16 16 16H336c8.800 0 16-7.200 16-16s-7.200-16-16-16H176c-8.800 0-16 7.200-16 16z"/></svg><span class="t " id="bar2" style="position:absolute;left:29.5px;letter-spacing:0.136px;transform:translateX(0.2px);">Archive</span></div>
</div>
<div class="row" style="top:310px;height:68px">
<div class="fbox"><svg class="ic" viewBox="0 0 384 512" width="13.5" height="18" style=""><path fill="#0d6efd" d="M64 0C28.7 0 0 28.7 0 64V448c0 35.3 28.7 64 64 64H320c35.3 0 64-28.7 64-64V160H256c-17.7 0-32-14.3-32-32V0H64zM256 0V128H384L256 0zM112 256H272c8.8 0 16 7.2 16 16s-7.2 16-16 16H112c-8.8 0-16-7.2-16-16s7.2-16 16-16zm0 64H272c8.8 0 16 7.2 16 16s-7.2 16-16 16H112c-8.8 0-16-7.2-16-16s7.2-16 16-16zm0 64H272c8.8 0 16 7.2 16 16s-7.2 16-16 16H112c-8.8 0-16-7.2-16-16s7.2-16 16-16z"/></svg></div>
<span class="t rt" id="r3" style="letter-spacing:0.37px;transform:translateX(0.41px);">Violence and Aggression Policy</span>
<span class="t ru" id="u3" style="letter-spacing:0.305px;transform:translateX(-1.03px);">Uploaded Oct 02, 2025</span>
<span class="t rn" id="n3" style="letter-spacing:0.502px;transform:translateX(-1.07px);">None</span>
<div class="bv"><span class="t " id="b3" style="letter-spacing:-0.244px;transform:translateX(0.81px);">v1.0</span></div>
<div class="ba"><svg class="ic" viewBox="0 0 512 512" width="13.3" height="13.3" style="position:absolute;left:9px;top:5.6px"><path fill="#198754" d="M256 512A256 256 0 1 0 256 0a256 256 0 1 0 0 512zM369 209L241 337c-9.400 9.400-24.600 9.400-33.900 0l-64-64c-9.400-9.400-9.400-24.600 0-33.900s24.600-9.400 33.900 0l47 47L335 175c9.400-9.400 24.600-9.400 33.900 0s9.400 24.600 0 33.900z"/></svg><span class="t " id="a3" style="position:absolute;left:31.5px;top:0;line-height:24px;letter-spacing:-0.512px;transform:translateX(-0.44px);">Active</span></div>
<div class="pb"><div style="width:14%"></div></div>
<span class="t pp" id="p3" style="letter-spacing:-0.423px;transform:translateX(0.28px);">14%</span>
<div class="ab v" style="left:963px;width:75px"><svg class="ic" viewBox="0 0 576 512" width="17.32" height="15.4" style="position:absolute;left:8.8px;top:8.4px"><path fill="#0d6efd" d="M288 32c-80.8 0-145.5 36.8-192.6 80.6C48.6 156 17.3 208 2.5 243.7c-3.3 7.9-3.3 16.7 0 24.6C17.3 304 48.6 356 95.4 399.4C142.5 443.2 207.2 480 288 480s145.5-36.8 192.6-80.6c46.8-43.5 78.1-95.4 93-131.1c3.3-7.9 3.3-16.7 0-24.6c-14.9-35.7-46.2-87.7-93-131.1C433.5 68.8 368.8 32 288 32zM144 256a144 144 0 1 1 288 0 144 144 0 1 1 -288 0zm144-64c0 35.3-28.7 64-64 64c-7.1 0-13.9-1.2-20.3-3.3c-5.500-1.8-11.9 1.6-11.7 7.4c.3 6.9 1.3 13.8 3.2 20.7c13.7 51.2 66.4 81.6 117.6 67.9s81.600-66.4 67.9-117.6c-11.100-41.5-47.800-69.4-88.600-71.100c-5.800-.2-9.200 6.100-7.400 11.700c2.100 6.400 3.300 13.200 3.300 20.300z"/></svg><span class="t " id="bv3" style="position:absolute;left:31.4px;letter-spacing:0.085px;transform:translateX(0.26px);">View</span></div>
<div class="ab c nb0" style="left:1047px;width:122.4px"><svg class="ic" viewBox="0 0 512 512" width="15.4" height="15.4" style="position:absolute;left:8.8px;top:8.4px"><path fill="#198754" d="M152.1 38.2c9.9 8.9 10.7 24 1.8 33.9l-72 80c-4.4 4.9-10.6 7.8-17.2 7.900s-12.900-2.400-17.600-7L7 113C-2.300 103.600-2.300 88.400 7 79s24.600-9.400 33.900 0l22.100 22.100 55.100-61.200c8.900-9.900 24-10.700 33.900-1.800zm0 160c9.900 8.900 10.700 24 1.800 33.900l-72 80c-4.400 4.900-10.600 7.800-17.200 7.900s-12.900-2.400-17.600-7L7 273c-9.400-9.400-9.400-24.600 0-33.900s24.600-9.400 33.900 0l22.100 22.100 55.100-61.200c8.900-9.900 24-10.700 33.900-1.800zM224 96c0-17.700 14.300-32 32-32H480c17.700 0 32 14.300 32 32s-14.300 32-32 32H256c-17.700 0-32-14.300-32-32zm0 160c0-17.700 14.300-32 32-32H480c17.700 0 32 14.300 32 32s-14.300 32-32 32H256c-17.700 0-32-14.300-32-32zM160 416c0-17.700 14.300-32 32-32H480c17.700 0 32 14.300 32 32s-14.300 32-32 32H192c-17.700 0-32-14.300-32-32zM48 368a48 48 0 1 1 0 96 48 48 0 1 1 0-96z"/></svg><span class="t " id="bc3" style="position:absolute;left:29.6px;letter-spacing:0.287px;transform:translateX(-0.31px);">Compliance</span></div>
<div class="ab n nb0" style="left:1178px;width:152px"><svg class="ic" viewBox="0 0 640 512" width="19.25" height="15.4" style="position:absolute;left:8.8px;top:8.4px"><path fill="#ffc107" d="M38.8 5.1C28.4-3.1 13.3-1.2 5.1 9.2S-1.2 34.7 9.2 42.9l592 464c10.4 8.2 25.5 6.3 33.7-4.100s6.300-25.5-4.100-33.700L353.300 251.600C407.900 237 448 187.200 448 128C448 57.300 390.700 0 320 0C250.200 0 193.500 55.800 192 125.200L38.800 5.100zM264.300 304.300C170.500 309.400 96 387.200 96 482.300c0 16.400 13.300 29.700 29.700 29.700H514.300c3.900 0 7.600-.7 11-2.100l-261-205.600z"/></svg><span class="t " id="bn3" style="position:absolute;left:33.5px;letter-spacing:0.703px;transform:translateX(-1.33px);">Non-Compliant</span></div>
<div class="ab a" style="left:1339px;width:92px"><svg class="ic" viewBox="0 0 512 512" width="15.4" height="15.4" style="position:absolute;left:8.8px;top:8.4px"><path fill="#dc3545" d="M32 32H480c17.700 0 32 14.300 32 32V96c0 17.700-14.300 32-32 32H32C14.300 128 0 113.700 0 96V64C0 46.300 14.300 32 32 32zm0 128H480V416c0 35.300-28.700 64-64 64H96c-35.300 0-64-28.700-64-64V160zm128 80c0 8.800 7.200 16 16 16H336c8.800 0 16-7.200 16-16s-7.200-16-16-16H176c-8.800 0-16 7.200-16 16z"/></svg><span class="t " id="bar3" style="position:absolute;left:29.5px;letter-spacing:0.136px;transform:translateX(0.2px);">Archive</span></div>
</div>
<div class="row" style="top:378px;height:68px">
<div class="fbox"><svg class="ic" viewBox="0 0 384 512" width="13.5" height="18" style=""><path fill="#0d6efd" d="M64 0C28.7 0 0 28.7 0 64V448c0 35.3 28.7 64 64 64H320c35.3 0 64-28.7 64-64V160H256c-17.7 0-32-14.3-32-32V0H64zM256 0V128H384L256 0zM112 256H272c8.8 0 16 7.2 16 16s-7.2 16-16 16H112c-8.8 0-16-7.2-16-16s7.2-16 16-16zm0 64H272c8.8 0 16 7.2 16 16s-7.2 16-16 16H112c-8.8 0-16-7.2-16-16s7.2-16 16-16zm0 64H272c8.8 0 16 7.2 16 16s-7.2 16-16 16H112c-8.8 0-16-7.2-16-16s7.2-16 16-16z"/></svg></div>
<span class="t rt" id="r4" style="letter-spacing:0.294px;transform:translateX(-0.32px);">Supervision of Residents Policy</span>
<span class="t ru" id="u4" style="letter-spacing:0.305px;transform:translateX(-1.03px);">Uploaded Oct 02, 2025</span>
<span class="t rn" id="n4" style="letter-spacing:0.502px;transform:translateX(-1.07px);">None</span>
<div class="bv"><span class="t " id="b4" style="letter-spacing:-0.244px;transform:translateX(0.81px);">v1.0</span></div>
<div class="ba"><svg class="ic" viewBox="0 0 512 512" width="13.3" height="13.3" style="position:absolute;left:9px;top:5.6px"><path fill="#198754" d="M256 512A256 256 0 1 0 256 0a256 256 0 1 0 0 512zM369 209L241 337c-9.400 9.400-24.600 9.400-33.900 0l-64-64c-9.400-9.400-9.400-24.600 0-33.900s24.600-9.400 33.900 0l47 47L335 175c9.400-9.400 24.600-9.400 33.900 0s9.400 24.600 0 33.900z"/></svg><span class="t " id="a4" style="position:absolute;left:31.5px;top:0;line-height:24px;letter-spacing:-0.512px;transform:translateX(-0.44px);">Active</span></div>
<div class="pb"><div style="width:14%"></div></div>
<span class="t pp" id="p4" style="letter-spacing:-0.423px;transform:translateX(0.28px);">14%</span>
<div class="ab v" style="left:963px;width:75px"><svg class="ic" viewBox="0 0 576 512" width="17.32" height="15.4" style="position:absolute;left:8.8px;top:8.4px"><path fill="#0d6efd" d="M288 32c-80.8 0-145.5 36.8-192.6 80.6C48.6 156 17.3 208 2.5 243.7c-3.3 7.9-3.3 16.7 0 24.6C17.3 304 48.6 356 95.4 399.4C142.5 443.2 207.2 480 288 480s145.5-36.8 192.6-80.6c46.8-43.5 78.1-95.4 93-131.1c3.3-7.9 3.3-16.7 0-24.6c-14.9-35.7-46.2-87.7-93-131.1C433.5 68.8 368.8 32 288 32zM144 256a144 144 0 1 1 288 0 144 144 0 1 1 -288 0zm144-64c0 35.3-28.7 64-64 64c-7.1 0-13.9-1.2-20.3-3.3c-5.500-1.8-11.9 1.6-11.7 7.4c.3 6.9 1.3 13.8 3.2 20.7c13.7 51.2 66.4 81.6 117.6 67.9s81.600-66.4 67.9-117.6c-11.100-41.5-47.800-69.4-88.600-71.100c-5.800-.2-9.200 6.100-7.400 11.700c2.100 6.400 3.300 13.200 3.300 20.300z"/></svg><span class="t " id="bv4" style="position:absolute;left:31.4px;letter-spacing:0.085px;transform:translateX(0.26px);">View</span></div>
<div class="ab c nb0" style="left:1047px;width:122.4px"><svg class="ic" viewBox="0 0 512 512" width="15.4" height="15.4" style="position:absolute;left:8.8px;top:8.4px"><path fill="#198754" d="M152.1 38.2c9.9 8.9 10.7 24 1.8 33.9l-72 80c-4.4 4.9-10.6 7.8-17.2 7.900s-12.900-2.400-17.600-7L7 113C-2.300 103.600-2.300 88.400 7 79s24.600-9.400 33.900 0l22.100 22.100 55.100-61.200c8.900-9.900 24-10.700 33.900-1.800zm0 160c9.900 8.900 10.700 24 1.800 33.900l-72 80c-4.400 4.900-10.600 7.800-17.200 7.900s-12.900-2.400-17.600-7L7 273c-9.400-9.400-9.400-24.600 0-33.900s24.600-9.400 33.900 0l22.100 22.100 55.100-61.200c8.900-9.900 24-10.700 33.900-1.800zM224 96c0-17.700 14.300-32 32-32H480c17.700 0 32 14.300 32 32s-14.300 32-32 32H256c-17.700 0-32-14.300-32-32zm0 160c0-17.700 14.300-32 32-32H480c17.700 0 32 14.300 32 32s-14.300 32-32 32H256c-17.700 0-32-14.300-32-32zM160 416c0-17.700 14.300-32 32-32H480c17.700 0 32 14.300 32 32s-14.300 32-32 32H192c-17.700 0-32-14.300-32-32zM48 368a48 48 0 1 1 0 96 48 48 0 1 1 0-96z"/></svg><span class="t " id="bc4" style="position:absolute;left:29.6px;letter-spacing:0.287px;transform:translateX(-0.31px);">Compliance</span></div>
<div class="ab n nb0" style="left:1178px;width:152px"><svg class="ic" viewBox="0 0 640 512" width="19.25" height="15.4" style="position:absolute;left:8.8px;top:8.4px"><path fill="#ffc107" d="M38.8 5.1C28.4-3.1 13.3-1.2 5.1 9.2S-1.2 34.7 9.2 42.9l592 464c10.4 8.2 25.5 6.3 33.7-4.100s6.300-25.5-4.100-33.700L353.300 251.600C407.900 237 448 187.200 448 128C448 57.300 390.700 0 320 0C250.200 0 193.500 55.800 192 125.200L38.800 5.100zM264.300 304.300C170.500 309.400 96 387.200 96 482.300c0 16.400 13.300 29.700 29.700 29.700H514.300c3.900 0 7.600-.7 11-2.100l-261-205.600z"/></svg><span class="t " id="bn4" style="position:absolute;left:33.5px;letter-spacing:0.703px;transform:translateX(-1.33px);">Non-Compliant</span></div>
<div class="ab a" style="left:1339px;width:92px"><svg class="ic" viewBox="0 0 512 512" width="15.4" height="15.4" style="position:absolute;left:8.8px;top:8.4px"><path fill="#dc3545" d="M32 32H480c17.700 0 32 14.300 32 32V96c0 17.700-14.300 32-32 32H32C14.300 128 0 113.700 0 96V64C0 46.300 14.300 32 32 32zm0 128H480V416c0 35.300-28.700 64-64 64H96c-35.300 0-64-28.700-64-64V160zm128 80c0 8.800 7.200 16 16 16H336c8.800 0 16-7.200 16-16s-7.200-16-16-16H176c-8.800 0-16 7.200-16 16z"/></svg><span class="t " id="bar4" style="position:absolute;left:29.5px;letter-spacing:0.136px;transform:translateX(0.2px);">Archive</span></div>
</div>
<div class="row" style="top:446px;height:67px">
<div class="fbox"><svg class="ic" viewBox="0 0 384 512" width="13.5" height="18" style=""><path fill="#0d6efd" d="M64 0C28.7 0 0 28.7 0 64V448c0 35.3 28.7 64 64 64H320c35.3 0 64-28.7 64-64V160H256c-17.7 0-32-14.3-32-32V0H64zM256 0V128H384L256 0zM112 256H272c8.8 0 16 7.2 16 16s-7.2 16-16 16H112c-8.8 0-16-7.2-16-16s7.2-16 16-16zm0 64H272c8.8 0 16 7.2 16 16s-7.2 16-16 16H112c-8.8 0-16-7.2-16-16s7.2-16 16-16zm0 64H272c8.8 0 16 7.2 16 16s-7.2 16-16 16H112c-8.8 0-16-7.2-16-16s7.2-16 16-16z"/></svg></div>
<span class="t rt" id="r5" style="letter-spacing:0.281px;transform:translateX(-0.32px);">Suicide and Self Harm Policy</span>
<span class="t ru" id="u5" style="letter-spacing:0.305px;transform:translateX(-1.03px);">Uploaded Oct 02, 2025</span>
<span class="t rn" id="n5" style="letter-spacing:0.502px;transform:translateX(-1.07px);">None</span>
<div class="bv"><span class="t " id="b5" style="letter-spacing:-0.244px;transform:translateX(0.81px);">v1.0</span></div>
<div class="ba"><svg class="ic" viewBox="0 0 512 512" width="13.3" height="13.3" style="position:absolute;left:9px;top:5.6px"><path fill="#198754" d="M256 512A256 256 0 1 0 256 0a256 256 0 1 0 0 512zM369 209L241 337c-9.400 9.400-24.600 9.400-33.900 0l-64-64c-9.400-9.400-9.400-24.600 0-33.900s24.600-9.400 33.900 0l47 47L335 175c9.400-9.400 24.600-9.400 33.900 0s9.400 24.600 0 33.900z"/></svg><span class="t " id="a5" style="position:absolute;left:31.5px;top:0;line-height:24px;letter-spacing:-0.512px;transform:translateX(-0.44px);">Active</span></div>
<div class="pb"><div style="width:11%"></div></div>
<span class="t pp" id="p5" style="letter-spacing:0.233px;transform:translateX(0.28px);">11%</span>
<div class="ab v" style="left:963px;width:75px"><svg class="ic" viewBox="0 0 576 512" width="17.32" height="15.4" style="position:absolute;left:8.8px;top:8.4px"><path fill="#0d6efd" d="M288 32c-80.8 0-145.5 36.8-192.6 80.6C48.6 156 17.3 208 2.5 243.7c-3.3 7.9-3.3 16.7 0 24.6C17.3 304 48.6 356 95.4 399.4C142.5 443.2 207.2 480 288 480s145.5-36.8 192.6-80.6c46.8-43.5 78.1-95.4 93-131.1c3.3-7.9 3.3-16.7 0-24.6c-14.9-35.7-46.2-87.7-93-131.1C433.5 68.8 368.8 32 288 32zM144 256a144 144 0 1 1 288 0 144 144 0 1 1 -288 0zm144-64c0 35.3-28.7 64-64 64c-7.1 0-13.9-1.2-20.3-3.3c-5.500-1.8-11.9 1.6-11.7 7.4c.3 6.9 1.3 13.8 3.2 20.7c13.7 51.2 66.4 81.6 117.6 67.9s81.600-66.4 67.9-117.6c-11.100-41.5-47.800-69.4-88.600-71.100c-5.800-.2-9.200 6.100-7.400 11.700c2.100 6.400 3.300 13.200 3.300 20.300z"/></svg><span class="t " id="bv5" style="position:absolute;left:31.4px;letter-spacing:0.085px;transform:translateX(0.26px);">View</span></div>
<div class="ab c nb0" style="left:1047px;width:122.4px"><svg class="ic" viewBox="0 0 512 512" width="15.4" height="15.4" style="position:absolute;left:8.8px;top:8.4px"><path fill="#198754" d="M152.1 38.2c9.9 8.9 10.7 24 1.8 33.9l-72 80c-4.4 4.9-10.6 7.8-17.2 7.900s-12.900-2.400-17.600-7L7 113C-2.300 103.600-2.300 88.400 7 79s24.600-9.400 33.900 0l22.100 22.100 55.100-61.200c8.900-9.900 24-10.700 33.900-1.800zm0 160c9.900 8.900 10.700 24 1.800 33.900l-72 80c-4.400 4.900-10.600 7.800-17.200 7.900s-12.900-2.400-17.600-7L7 273c-9.400-9.400-9.400-24.600 0-33.900s24.600-9.400 33.900 0l22.100 22.100 55.100-61.200c8.900-9.900 24-10.700 33.900-1.800zM224 96c0-17.700 14.300-32 32-32H480c17.700 0 32 14.300 32 32s-14.300 32-32 32H256c-17.700 0-32-14.300-32-32zm0 160c0-17.700 14.300-32 32-32H480c17.700 0 32 14.300 32 32s-14.300 32-32 32H256c-17.700 0-32-14.300-32-32zM160 416c0-17.700 14.300-32 32-32H480c17.700 0 32 14.300 32 32s-14.300 32-32 32H192c-17.700 0-32-14.300-32-32zM48 368a48 48 0 1 1 0 96 48 48 0 1 1 0-96z"/></svg><span class="t " id="bc5" style="position:absolute;left:29.6px;letter-spacing:0.287px;transform:translateX(-0.31px);">Compliance</span></div>
<div class="ab n nb0" style="left:1178px;width:152px"><svg class="ic" viewBox="0 0 640 512" width="19.25" height="15.4" style="position:absolute;left:8.8px;top:8.4px"><path fill="#ffc107" d="M38.8 5.1C28.4-3.1 13.3-1.2 5.1 9.2S-1.2 34.7 9.2 42.9l592 464c10.4 8.2 25.5 6.3 33.7-4.100s6.300-25.5-4.100-33.700L353.300 251.600C407.900 237 448 187.200 448 128C448 57.300 390.700 0 320 0C250.200 0 193.500 55.800 192 125.200L38.800 5.100zM264.300 304.300C170.500 309.400 96 387.200 96 482.300c0 16.400 13.300 29.700 29.700 29.700H514.300c3.900 0 7.600-.7 11-2.100l-261-205.600z"/></svg><span class="t " id="bn5" style="position:absolute;left:33.5px;letter-spacing:0.703px;transform:translateX(-1.33px);">Non-Compliant</span></div>
<div class="ab a" style="left:1339px;width:92px"><svg class="ic" viewBox="0 0 512 512" width="15.4" height="15.4" style="position:absolute;left:8.8px;top:8.4px"><path fill="#dc3545" d="M32 32H480c17.700 0 32 14.300 32 32V96c0 17.700-14.300 32-32 32H32C14.300 128 0 113.700 0 96V64C0 46.300 14.300 32 32 32zm0 128H480V416c0 35.300-28.700 64-64 64H96c-35.300 0-64-28.700-64-64V160zm128 80c0 8.800 7.200 16 16 16H336c8.800 0 16-7.200 16-16s-7.200-16-16-16H176c-8.800 0-16 7.200-16 16z"/></svg><span class="t " id="bar5" style="position:absolute;left:29.5px;letter-spacing:0.136px;transform:translateX(0.2px);">Archive</span></div>
</div>
<div class="row" style="top:513px;height:68px">
<div class="fbox"><svg class="ic" viewBox="0 0 384 512" width="13.5" height="18" style=""><path fill="#0d6efd" d="M64 0C28.7 0 0 28.7 0 64V448c0 35.3 28.7 64 64 64H320c35.3 0 64-28.7 64-64V160H256c-17.7 0-32-14.3-32-32V0H64zM256 0V128H384L256 0zM112 256H272c8.8 0 16 7.2 16 16s-7.2 16-16 16H112c-8.8 0-16-7.2-16-16s7.2-16 16-16zm0 64H272c8.8 0 16 7.2 16 16s-7.2 16-16 16H112c-8.8 0-16-7.2-16-16s7.2-16 16-16zm0 64H272c8.8 0 16 7.2 16 16s-7.2 16-16 16H112c-8.8 0-16-7.2-16-16s7.2-16 16-16z"/></svg></div>
<span class="t rt" id="r6" style="letter-spacing:0.455px;transform:translateX(-0.32px);">Smoking and Vaping Policy</span>
<span class="t ru" id="u6" style="letter-spacing:0.305px;transform:translateX(-1.03px);">Uploaded Oct 02, 2025</span>
<span class="t rn" id="n6" style="letter-spacing:0.502px;transform:translateX(-1.07px);">None</span>
<div class="bv"><span class="t " id="b6" style="letter-spacing:-0.244px;transform:translateX(0.81px);">v1.0</span></div>
<div class="ba"><svg class="ic" viewBox="0 0 512 512" width="13.3" height="13.3" style="position:absolute;left:9px;top:5.6px"><path fill="#198754" d="M256 512A256 256 0 1 0 256 0a256 256 0 1 0 0 512zM369 209L241 337c-9.400 9.400-24.600 9.400-33.900 0l-64-64c-9.400-9.400-9.400-24.600 0-33.900s24.600-9.400 33.900 0l47 47L335 175c9.400-9.400 24.600-9.400 33.900 0s9.400 24.600 0 33.900z"/></svg><span class="t " id="a6" style="position:absolute;left:31.5px;top:0;line-height:24px;letter-spacing:-0.512px;transform:translateX(-0.44px);">Active</span></div>
<div class="pb"><div style="width:11%"></div></div>
<span class="t pp" id="p6" style="letter-spacing:0.233px;transform:translateX(0.28px);">11%</span>
<div class="ab v" style="left:963px;width:75px"><svg class="ic" viewBox="0 0 576 512" width="17.32" height="15.4" style="position:absolute;left:8.8px;top:8.4px"><path fill="#0d6efd" d="M288 32c-80.8 0-145.5 36.8-192.6 80.6C48.6 156 17.3 208 2.5 243.7c-3.3 7.9-3.3 16.7 0 24.6C17.3 304 48.6 356 95.4 399.4C142.5 443.2 207.2 480 288 480s145.5-36.8 192.6-80.6c46.8-43.5 78.1-95.4 93-131.1c3.3-7.9 3.3-16.7 0-24.6c-14.9-35.7-46.2-87.7-93-131.1C433.5 68.8 368.8 32 288 32zM144 256a144 144 0 1 1 288 0 144 144 0 1 1 -288 0zm144-64c0 35.3-28.7 64-64 64c-7.1 0-13.9-1.2-20.3-3.3c-5.500-1.8-11.9 1.6-11.7 7.4c.3 6.9 1.3 13.8 3.2 20.7c13.7 51.2 66.4 81.6 117.6 67.9s81.600-66.4 67.9-117.6c-11.100-41.5-47.800-69.4-88.600-71.100c-5.800-.2-9.200 6.100-7.400 11.700c2.100 6.400 3.300 13.200 3.300 20.300z"/></svg><span class="t " id="bv6" style="position:absolute;left:31.4px;letter-spacing:0.085px;transform:translateX(0.26px);">View</span></div>
<div class="ab c nb0" style="left:1047px;width:122.4px"><svg class="ic" viewBox="0 0 512 512" width="15.4" height="15.4" style="position:absolute;left:8.8px;top:8.4px"><path fill="#198754" d="M152.1 38.2c9.9 8.9 10.7 24 1.8 33.9l-72 80c-4.4 4.9-10.6 7.8-17.2 7.900s-12.900-2.400-17.600-7L7 113C-2.300 103.600-2.300 88.400 7 79s24.600-9.400 33.900 0l22.100 22.100 55.100-61.200c8.900-9.900 24-10.700 33.900-1.800zm0 160c9.900 8.900 10.700 24 1.800 33.900l-72 80c-4.400 4.900-10.600 7.800-17.200 7.900s-12.900-2.400-17.600-7L7 273c-9.400-9.400-9.400-24.600 0-33.900s24.600-9.400 33.900 0l22.100 22.100 55.100-61.200c8.900-9.900 24-10.700 33.900-1.800zM224 96c0-17.700 14.300-32 32-32H480c17.700 0 32 14.300 32 32s-14.300 32-32 32H256c-17.700 0-32-14.300-32-32zm0 160c0-17.700 14.300-32 32-32H480c17.700 0 32 14.300 32 32s-14.300 32-32 32H256c-17.700 0-32-14.300-32-32zM160 416c0-17.700 14.300-32 32-32H480c17.700 0 32 14.300 32 32s-14.300 32-32 32H192c-17.700 0-32-14.300-32-32zM48 368a48 48 0 1 1 0 96 48 48 0 1 1 0-96z"/></svg><span class="t " id="bc6" style="position:absolute;left:29.6px;letter-spacing:0.287px;transform:translateX(-0.31px);">Compliance</span></div>
<div class="ab n nb0" style="left:1178px;width:152px"><svg class="ic" viewBox="0 0 640 512" width="19.25" height="15.4" style="position:absolute;left:8.8px;top:8.4px"><path fill="#ffc107" d="M38.8 5.1C28.4-3.1 13.3-1.2 5.1 9.2S-1.2 34.7 9.2 42.9l592 464c10.4 8.2 25.5 6.3 33.7-4.100s6.300-25.5-4.100-33.700L353.300 251.600C407.900 237 448 187.200 448 128C448 57.300 390.700 0 320 0C250.200 0 193.500 55.800 192 125.200L38.800 5.100zM264.300 304.300C170.500 309.400 96 387.200 96 482.300c0 16.400 13.300 29.700 29.700 29.700H514.300c3.900 0 7.600-.7 11-2.100l-261-205.600z"/></svg><span class="t " id="bn6" style="position:absolute;left:33.5px;letter-spacing:0.703px;transform:translateX(-1.33px);">Non-Compliant</span></div>
<div class="ab a" style="left:1339px;width:92px"><svg class="ic" viewBox="0 0 512 512" width="15.4" height="15.4" style="position:absolute;left:8.8px;top:8.4px"><path fill="#dc3545" d="M32 32H480c17.700 0 32 14.300 32 32V96c0 17.700-14.300 32-32 32H32C14.300 128 0 113.700 0 96V64C0 46.300 14.300 32 32 32zm0 128H480V416c0 35.300-28.700 64-64 64H96c-35.300 0-64-28.700-64-64V160zm128 80c0 8.800 7.200 16 16 16H336c8.800 0 16-7.200 16-16s-7.200-16-16-16H176c-8.800 0-16 7.200-16 16z"/></svg><span class="t " id="bar6" style="position:absolute;left:29.5px;letter-spacing:0.136px;transform:translateX(0.2px);">Archive</span></div>
</div>
<div class="row" style="top:581px;height:67px">
<div class="fbox"><svg class="ic" viewBox="0 0 384 512" width="13.5" height="18" style=""><path fill="#0d6efd" d="M64 0C28.7 0 0 28.7 0 64V448c0 35.3 28.7 64 64 64H320c35.3 0 64-28.7 64-64V160H256c-17.7 0-32-14.3-32-32V0H64zM256 0V128H384L256 0zM112 256H272c8.8 0 16 7.2 16 16s-7.2 16-16 16H112c-8.8 0-16-7.2-16-16s7.2-16 16-16zm0 64H272c8.8 0 16 7.2 16 16s-7.2 16-16 16H112c-8.8 0-16-7.2-16-16s7.2-16 16-16zm0 64H272c8.8 0 16 7.2 16 16s-7.2 16-16 16H112c-8.8 0-16-7.2-16-16s7.2-16 16-16z"/></svg></div>
<span class="t rt" id="r7" style="letter-spacing:0.389px;transform:translateX(-0.32px);">Sexuality and Intimate Relationships Policy</span>
<span class="t ru" id="u7" style="letter-spacing:0.305px;transform:translateX(-1.03px);">Uploaded Oct 02, 2025</span>
<span class="t rn" id="n7" style="letter-spacing:0.502px;transform:translateX(-1.07px);">None</span>
<div class="bv"><span class="t " id="b7" style="letter-spacing:-0.244px;transform:translateX(0.81px);">v1.0</span></div>
<div class="ba"><svg class="ic" viewBox="0 0 512 512" width="13.3" height="13.3" style="position:absolute;left:9px;top:5.6px"><path fill="#198754" d="M256 512A256 256 0 1 0 256 0a256 256 0 1 0 0 512zM369 209L241 337c-9.400 9.400-24.600 9.400-33.900 0l-64-64c-9.400-9.400-9.400-24.600 0-33.900s24.600-9.400 33.900 0l47 47L335 175c9.400-9.400 24.600-9.400 33.900 0s9.400 24.600 0 33.900z"/></svg><span class="t " id="a7" style="position:absolute;left:31.5px;top:0;line-height:24px;letter-spacing:-0.512px;transform:translateX(-0.44px);">Active</span></div>
<div class="pb"><div style="width:11%"></div></div>
<span class="t pp" id="p7" style="letter-spacing:0.233px;transform:translateX(0.28px);">11%</span>
<div class="ab v" style="left:963px;width:75px"><svg class="ic" viewBox="0 0 576 512" width="17.32" height="15.4" style="position:absolute;left:8.8px;top:8.4px"><path fill="#0d6efd" d="M288 32c-80.8 0-145.5 36.8-192.6 80.6C48.6 156 17.3 208 2.5 243.7c-3.3 7.9-3.3 16.7 0 24.6C17.3 304 48.6 356 95.4 399.4C142.5 443.2 207.2 480 288 480s145.5-36.8 192.6-80.6c46.8-43.5 78.1-95.4 93-131.1c3.3-7.9 3.3-16.7 0-24.6c-14.9-35.7-46.2-87.7-93-131.1C433.5 68.8 368.8 32 288 32zM144 256a144 144 0 1 1 288 0 144 144 0 1 1 -288 0zm144-64c0 35.3-28.7 64-64 64c-7.1 0-13.9-1.2-20.3-3.3c-5.500-1.8-11.9 1.6-11.7 7.4c.3 6.9 1.3 13.8 3.2 20.7c13.7 51.2 66.4 81.6 117.6 67.9s81.600-66.4 67.9-117.6c-11.100-41.5-47.800-69.4-88.600-71.100c-5.800-.2-9.200 6.100-7.400 11.700c2.100 6.400 3.300 13.200 3.300 20.300z"/></svg><span class="t " id="bv7" style="position:absolute;left:31.4px;letter-spacing:0.085px;transform:translateX(0.26px);">View</span></div>
<div class="ab c nb0" style="left:1047px;width:122.4px"><svg class="ic" viewBox="0 0 512 512" width="15.4" height="15.4" style="position:absolute;left:8.8px;top:8.4px"><path fill="#198754" d="M152.1 38.2c9.9 8.9 10.7 24 1.8 33.9l-72 80c-4.4 4.9-10.6 7.8-17.2 7.900s-12.900-2.400-17.600-7L7 113C-2.300 103.600-2.300 88.400 7 79s24.600-9.400 33.900 0l22.100 22.100 55.100-61.200c8.900-9.900 24-10.700 33.900-1.800zm0 160c9.900 8.900 10.700 24 1.800 33.900l-72 80c-4.400 4.900-10.600 7.800-17.200 7.900s-12.900-2.400-17.600-7L7 273c-9.400-9.400-9.400-24.600 0-33.900s24.600-9.400 33.900 0l22.100 22.100 55.100-61.200c8.900-9.900 24-10.700 33.900-1.800zM224 96c0-17.700 14.300-32 32-32H480c17.700 0 32 14.300 32 32s-14.300 32-32 32H256c-17.700 0-32-14.300-32-32zm0 160c0-17.700 14.300-32 32-32H480c17.700 0 32 14.300 32 32s-14.300 32-32 32H256c-17.700 0-32-14.300-32-32zM160 416c0-17.700 14.300-32 32-32H480c17.700 0 32 14.300 32 32s-14.300 32-32 32H192c-17.700 0-32-14.300-32-32zM48 368a48 48 0 1 1 0 96 48 48 0 1 1 0-96z"/></svg><span class="t " id="bc7" style="position:absolute;left:29.6px;letter-spacing:0.287px;transform:translateX(-0.31px);">Compliance</span></div>
<div class="ab n nb0" style="left:1178px;width:152px"><svg class="ic" viewBox="0 0 640 512" width="19.25" height="15.4" style="position:absolute;left:8.8px;top:8.4px"><path fill="#ffc107" d="M38.8 5.1C28.4-3.1 13.3-1.2 5.1 9.2S-1.2 34.7 9.2 42.9l592 464c10.4 8.2 25.5 6.3 33.7-4.100s6.300-25.5-4.100-33.700L353.300 251.600C407.900 237 448 187.200 448 128C448 57.300 390.700 0 320 0C250.200 0 193.500 55.800 192 125.200L38.800 5.100zM264.300 304.300C170.500 309.400 96 387.200 96 482.300c0 16.400 13.300 29.700 29.700 29.700H514.300c3.900 0 7.600-.7 11-2.100l-261-205.600z"/></svg><span class="t " id="bn7" style="position:absolute;left:33.5px;letter-spacing:0.703px;transform:translateX(-1.33px);">Non-Compliant</span></div>
<div class="ab a" style="left:1339px;width:92px"><svg class="ic" viewBox="0 0 512 512" width="15.4" height="15.4" style="position:absolute;left:8.8px;top:8.4px"><path fill="#dc3545" d="M32 32H480c17.700 0 32 14.300 32 32V96c0 17.700-14.300 32-32 32H32C14.300 128 0 113.700 0 96V64C0 46.300 14.300 32 32 32zm0 128H480V416c0 35.300-28.700 64-64 64H96c-35.300 0-64-28.700-64-64V160zm128 80c0 8.800 7.200 16 16 16H336c8.800 0 16-7.200 16-16s-7.200-16-16-16H176c-8.800 0-16 7.200-16 16z"/></svg><span class="t " id="bar7" style="position:absolute;left:29.5px;letter-spacing:0.136px;transform:translateX(0.2px);">Archive</span></div>
</div>
<div class="row" style="top:648px;height:68px">
<div class="fbox"><svg class="ic" viewBox="0 0 384 512" width="13.5" height="18" style=""><path fill="#0d6efd" d="M64 0C28.7 0 0 28.7 0 64V448c0 35.3 28.7 64 64 64H320c35.3 0 64-28.7 64-64V160H256c-17.7 0-32-14.3-32-32V0H64zM256 0V128H384L256 0zM112 256H272c8.8 0 16 7.2 16 16s-7.2 16-16 16H112c-8.8 0-16-7.2-16-16s7.2-16 16-16zm0 64H272c8.8 0 16 7.2 16 16s-7.2 16-16 16H112c-8.8 0-16-7.2-16-16s7.2-16 16-16zm0 64H272c8.8 0 16 7.2 16 16s-7.2 16-16 16H112c-8.8 0-16-7.2-16-16s7.2-16 16-16z"/></svg></div>
<span class="t rt" id="r8" style="">Safeguarding Vulnerable Adults Policy</span>
<span class="t ru" id="u8" style="">Uploaded Oct 02, 2025</span>
<span class="t rn" id="n8" style="">None</span>
<div class="bv"><span class="t " id="b8" style="">v1.0</span></div>
<div class="ba"><svg class="ic" viewBox="0 0 512 512" width="13.3" height="13.3" style="position:absolute;left:9px;top:5.6px"><path fill="#198754" d="M256 512A256 256 0 1 0 256 0a256 256 0 1 0 0 512zM369 209L241 337c-9.400 9.400-24.600 9.400-33.900 0l-64-64c-9.400-9.400-9.400-24.600 0-33.900s24.600-9.400 33.900 0l47 47L335 175c9.400-9.400 24.600-9.400 33.900 0s9.400 24.600 0 33.900z"/></svg><span class="t " id="a8" style="position:absolute;left:31.5px;top:0;line-height:24px;">Active</span></div>
<div class="pb"><div style="width:11%"></div></div>
<span class="t pp" id="p8" style="">11%</span>
<div class="ab v" style="left:963px;width:75px"><svg class="ic" viewBox="0 0 576 512" width="17.32" height="15.4" style="position:absolute;left:8.8px;top:8.4px"><path fill="#0d6efd" d="M288 32c-80.8 0-145.5 36.8-192.6 80.6C48.6 156 17.3 208 2.5 243.7c-3.3 7.9-3.3 16.7 0 24.6C17.3 304 48.6 356 95.4 399.4C142.5 443.2 207.2 480 288 480s145.5-36.8 192.6-80.6c46.8-43.5 78.1-95.4 93-131.1c3.3-7.9 3.3-16.7 0-24.6c-14.9-35.7-46.2-87.7-93-131.1C433.5 68.8 368.8 32 288 32zM144 256a144 144 0 1 1 288 0 144 144 0 1 1 -288 0zm144-64c0 35.3-28.7 64-64 64c-7.1 0-13.9-1.2-20.3-3.3c-5.500-1.8-11.9 1.6-11.7 7.4c.3 6.9 1.3 13.8 3.2 20.7c13.7 51.2 66.4 81.6 117.6 67.9s81.600-66.4 67.9-117.6c-11.100-41.5-47.800-69.4-88.600-71.100c-5.800-.2-9.200 6.100-7.400 11.700c2.100 6.400 3.300 13.200 3.300 20.300z"/></svg><span class="t " id="bv8" style="position:absolute;left:31.4px;">View</span></div>
<div class="ab c nb0" style="left:1047px;width:122.4px"><svg class="ic" viewBox="0 0 512 512" width="15.4" height="15.4" style="position:absolute;left:8.8px;top:8.4px"><path fill="#198754" d="M152.1 38.2c9.9 8.9 10.7 24 1.8 33.9l-72 80c-4.4 4.9-10.6 7.8-17.2 7.900s-12.900-2.400-17.600-7L7 113C-2.300 103.600-2.300 88.400 7 79s24.600-9.400 33.900 0l22.100 22.100 55.100-61.200c8.900-9.900 24-10.700 33.900-1.800zm0 160c9.900 8.900 10.700 24 1.800 33.900l-72 80c-4.400 4.900-10.600 7.800-17.200 7.900s-12.900-2.400-17.600-7L7 273c-9.400-9.400-9.400-24.600 0-33.900s24.600-9.400 33.900 0l22.100 22.100 55.100-61.200c8.900-9.900 24-10.700 33.900-1.800zM224 96c0-17.700 14.300-32 32-32H480c17.700 0 32 14.300 32 32s-14.300 32-32 32H256c-17.700 0-32-14.300-32-32zm0 160c0-17.700 14.300-32 32-32H480c17.700 0 32 14.300 32 32s-14.300 32-32 32H256c-17.700 0-32-14.300-32-32zM160 416c0-17.700 14.300-32 32-32H480c17.700 0 32 14.300 32 32s-14.300 32-32 32H192c-17.700 0-32-14.300-32-32zM48 368a48 48 0 1 1 0 96 48 48 0 1 1 0-96z"/></svg><span class="t " id="bc8" style="position:absolute;left:29.6px;">Compliance</span></div>
<div class="ab n nb0" style="left:1178px;width:152px"><svg class="ic" viewBox="0 0 640 512" width="19.25" height="15.4" style="position:absolute;left:8.8px;top:8.4px"><path fill="#ffc107" d="M38.8 5.1C28.4-3.1 13.3-1.2 5.1 9.2S-1.2 34.7 9.2 42.9l592 464c10.4 8.2 25.5 6.3 33.7-4.100s6.300-25.5-4.100-33.700L353.300 251.600C407.900 237 448 187.200 448 128C448 57.300 390.700 0 320 0C250.200 0 193.500 55.800 192 125.200L38.800 5.100zM264.300 304.300C170.500 309.400 96 387.200 96 482.300c0 16.400 13.300 29.700 29.700 29.700H514.300c3.900 0 7.600-.7 11-2.100l-261-205.600z"/></svg><span class="t " id="bn8" style="position:absolute;left:33.5px;">Non-Compliant</span></div>
<div class="ab a" style="left:1339px;width:92px"><svg class="ic" viewBox="0 0 512 512" width="15.4" height="15.4" style="position:absolute;left:8.8px;top:8.4px"><path fill="#dc3545" d="M32 32H480c17.700 0 32 14.300 32 32V96c0 17.700-14.300 32-32 32H32C14.300 128 0 113.700 0 96V64C0 46.300 14.300 32 32 32zm0 128H480V416c0 35.300-28.700 64-64 64H96c-35.300 0-64-28.700-64-64V160zm128 80c0 8.800 7.200 16 16 16H336c8.800 0 16-7.200 16-16s-7.200-16-16-16H176c-8.800 0-16 7.200-16 16z"/></svg><span class="t " id="bar8" style="position:absolute;left:29.5px;">Archive</span></div>
</div>
</div>
<div class="fab g"><svg class="ic" viewBox="0 0 576 512" width="20.93" height="18.6" style=""><path fill="#fff" d="M575.8 255.5c0 18-15 32.1-32 32.1h-32l.7 160.2c0 2.7-.2 5.4-.5 8.1V472c0 22.1-17.9 40-40 40H456c-1.1 0-2.2 0-3.3-.1c-1.4 .1-2.8 .1-4.2 .1H416 392c-22.1 0-40-17.9-40-40V448 384c0-17.7-14.3-32-32-32H256c-17.7 0-32 14.3-32 32v64 24c0 22.1-17.9 40-40 40H160 128.1c-1.5 0-3-.1-4.5-.2c-1.2 .1-2.4 .2-3.6 .2H104c-22.1 0-40-17.9-40-40V360c0-.9 0-1.9 .1-2.8V287.6H32c-18 0-32-14-32-32.1c0-9 3-17 10-24L266.400 8c7-7 15-8 22-8s15 2 21 7L564.8 231.5c8 7 12 15 11 24z"/></svg></div>
<div class="fab b"><svg class="ic" viewBox="0 0 448 512" width="16.28" height="18.6" style=""><path fill="#fff" d="M9.4 233.4c-12.5 12.5-12.5 32.8 0 45.3l160 160c12.5 12.5 32.8 12.5 45.3 0s12.5-32.8 0-45.3L109.200 288 416 288c17.700 0 32-14.300 32-32s-14.300-32-32-32l-306.700 0L214.600 118.600c12.500-12.500 12.500-32.800 0-45.300s-32.800-12.500-45.300 0l-160 160z"/></svg></div>
<div class="sb"><div class="sbu"></div><div class="sbt"></div><div class="sbd"></div></div>
</body></html>
